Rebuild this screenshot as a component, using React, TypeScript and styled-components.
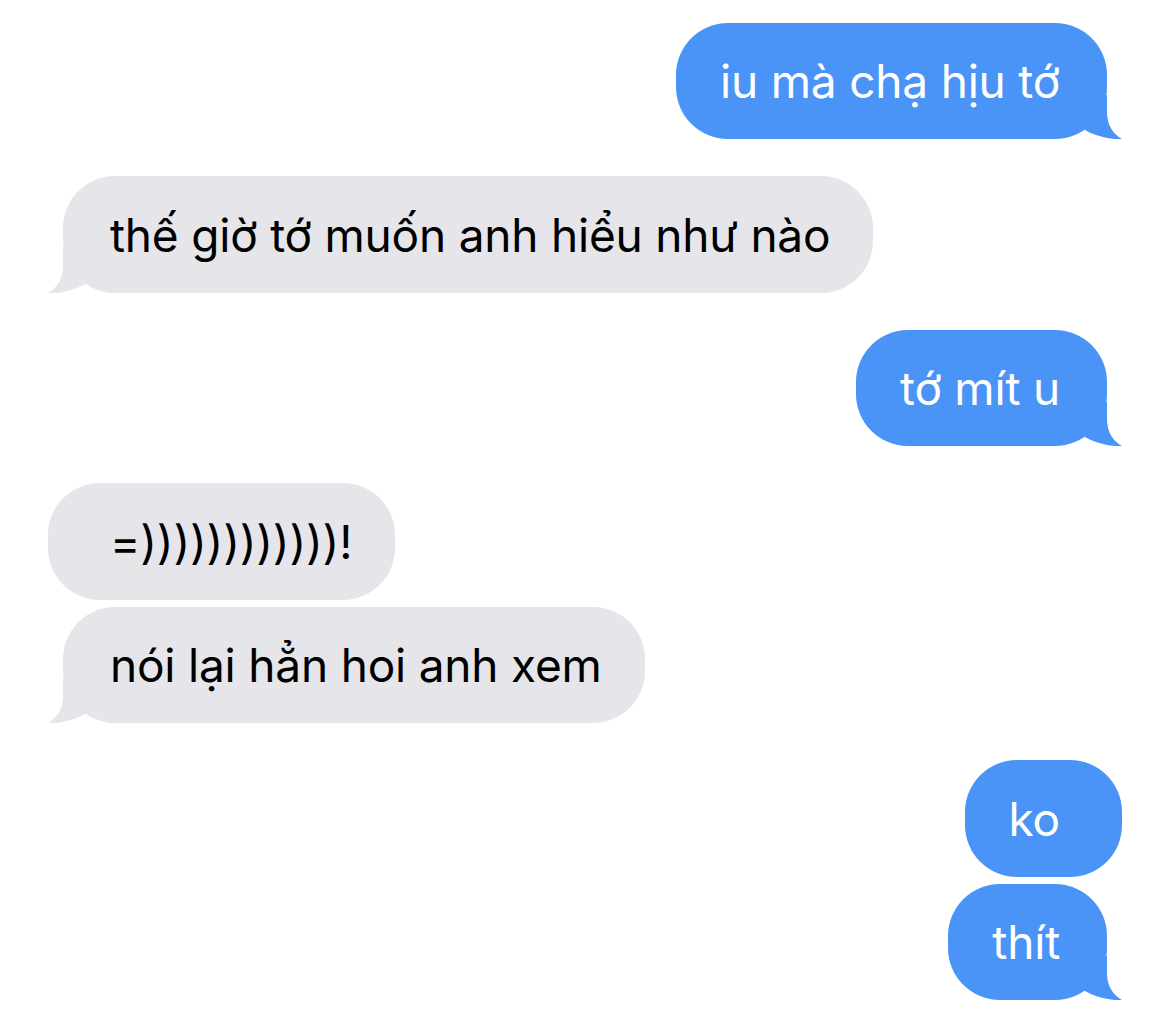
import React from "react";
import styled, { createGlobalStyle, css } from "styled-components";

const BLUE = "#4a93f7";
const GREY = "#e5e5ea";

const GlobalStyle = createGlobalStyle`
  html, body {
    margin: 0;
    padding: 0;
    background: #ffffff;
  }
  body {
    font-family: Inter, "Noto Sans", "DejaVu Sans", sans-serif;
    -webkit-font-smoothing: antialiased;
  }
`;

const Thread = styled.main`
  display: flex;
  flex-direction: column;
  gap: 37px;
  padding: 22.5px 48px 0;
  width: 1170px;
  box-sizing: border-box;
`;

const Group = styled.section<{ $sent: boolean }>`
  display: flex;
  flex-direction: column;
  gap: 7px;
  align-items: ${(p) => (p.$sent ? "flex-end" : "flex-start")};
`;

const Bubble = styled.div<{ $sent: boolean; $tail: boolean }>`
  position: relative;
  box-sizing: border-box;
  height: 116.5px;
  border-radius: 52px;
  font-size: 46px;
  line-height: 56px;
  letter-spacing: -0.2px;
  padding-top: 30.5px;
  white-space: nowrap;
  ${(p) =>
    p.$sent
      ? css`
          background: ${BLUE};
          color: #ffffff;
          padding-left: 44px;
          padding-right: ${p.$tail ? 47 : 62}px;
          margin-right: ${p.$tail ? 15 : 0}px;
        `
      : css`
          background: ${GREY};
          color: #000000;
          padding-left: ${p.$tail ? 47 : 62}px;
          padding-right: 43px;
          margin-left: ${p.$tail ? 15 : 0}px;
        `}
`;

const Tail = styled.svg<{ $sent: boolean }>`
  position: absolute;
  bottom: -1px;
  width: 37px;
  height: 45px;
  ${(p) =>
    p.$sent
      ? css`
          right: -15px;
        `
      : css`
          left: -15px;
          transform: scaleX(-1);
        `}
`;

type Msg = { text: string; tail: boolean };
type Block = { sent: boolean; msgs: Msg[] };

const blocks: Block[] = [
  { sent: true, msgs: [{ text: "iu mà chạ hịu tớ", tail: true }] },
  { sent: false, msgs: [{ text: "thế giờ tớ muốn anh hiểu như nào", tail: true }] },
  { sent: true, msgs: [{ text: "tớ mít u", tail: true }] },
  {
    sent: false,
    msgs: [
      { text: "=))))))))))))!", tail: false },
      { text: "nói lại hẳn hoi anh xem", tail: true },
    ],
  },
  {
    sent: true,
    msgs: [
      { text: "ko", tail: false },
      { text: "thít", tail: true },
    ],
  },
];

function BubbleTail({ sent }: { sent: boolean }) {
  return (
    <Tail $sent={sent} viewBox="0 0 37 45" aria-hidden>
      <path
        d="M22 0 L22 17 C22 30 28 39 37 44 C25 44.6 10 41 0 35 L0 0 Z"
        fill={sent ? BLUE : GREY}
      />
    </Tail>
  );
}

export default function App() {
  return (
    <>
      <GlobalStyle />
      <Thread>
        {blocks.map((b, i) => (
          <Group key={i} $sent={b.sent}>
            {b.msgs.map((m, j) => (
              <Bubble key={j} $sent={b.sent} $tail={m.tail}>
                {m.text}
                {m.tail && <BubbleTail sent={b.sent} />}
              </Bubble>
            ))}
          </Group>
        ))}
      </Thread>
    </>
  );
}
